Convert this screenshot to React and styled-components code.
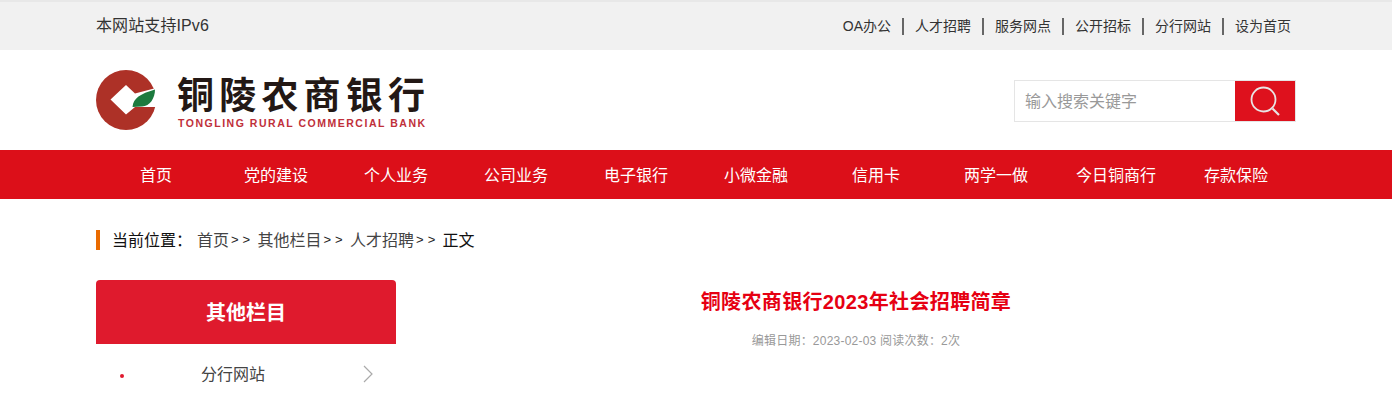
import React from 'react';
import styled, { createGlobalStyle } from 'styled-components';

const GlobalStyle = createGlobalStyle`
  html, body {
    margin: 0;
    padding: 0;
    background: #fff;
    overflow: hidden;
    font-family: "Liberation Sans", "Noto Sans CJK SC", sans-serif;
  }
  * { box-sizing: border-box; }
`;

const Wrap = styled.div`
  width: 1200px;
  margin-left: 96px;
`;

const TopBar = styled.div`
  height: 50px;
  background: #f1f1f1;
  border-top: 2px solid #e8e8e8;
`;

const TopInner = styled(Wrap)`
  height: 48px;
  display: flex;
  justify-content: space-between;
  align-items: center;
`;

const Ipv6 = styled.span`
  font-size: 16px;
  line-height: 20px;
  letter-spacing: 0.1px;
  color: #333;
`;

const TopLinks = styled.div`
  display: flex;
  align-items: center;
  padding-right: 5px;
`;

const TopLink = styled.a`
  font-size: 14px;
  line-height: 17px;
  color: #333;
  padding: 0 11px;
  border-left: ${p => (p.$first ? 'none' : '2px solid #666')};
  &:last-child { padding-right: 0; }
`;

const Header = styled(Wrap)`
  height: 100px;
  display: flex;
  justify-content: space-between;
  align-items: center;
`;

const Logo = styled.div`
  display: flex;
  align-items: center;
  gap: 21px;
`;

const LogoText = styled.div`
  display: flex;
  flex-direction: column;
  padding-top: 5px;
`;

const LogoName = styled.span`
  font-size: 37px;
  line-height: 40px;
  font-weight: 700;
  letter-spacing: 5.2px;
  color: #231815;
  white-space: nowrap;
`;

const LogoEn = styled.span`
  font-size: 10.5px;
  line-height: 12px;
  font-weight: 700;
  letter-spacing: 1.52px;
  margin-left: 1px;
  color: #c0303a;
  white-space: nowrap;
`;

const Search = styled.div`
  width: 282px;
  height: 42px;
  margin-top: 2px;
  border: 1px solid #e5e5e5;
  display: flex;
`;

const SearchInput = styled.div`
  flex: 1;
  padding-left: 10px;
  font-size: 16px;
  line-height: 42px;
  color: #999;
`;

const SearchButton = styled.div`
  width: 60px;
  background: #de111d;
  display: flex;
  align-items: center;
  justify-content: center;
`;

const NavBar = styled.div`
  height: 49px;
  background: #dc0f19;
`;

const NavList = styled(Wrap)`
  display: flex;
`;

const NavItem = styled.a`
  width: 120px;
  text-align: center;
  font-size: 16px;
  line-height: 51px;
  color: #fff;
`;

const Crumbs = styled(Wrap)`
  margin-top: 31px;
  height: 20px;
  border-left: 4px solid #ea6b00;
  padding: 0 0 2px 12px;
  display: flex;
  align-items: center;
  font-size: 16px;
  color: #111;
`;

const CrumbLabel = styled.span`
  width: 85px;
  white-space: nowrap;
`;

const CrumbLink = styled.a`
  color: #444;
`;

const CrumbSep = styled.span`
  width: 28.5px;
  padding-left: 2px;
  font-size: 13px;
  letter-spacing: 4px;
  color: #222;
`;

const Main = styled(Wrap)`
  margin-top: 30px;
  display: flex;
  gap: 20px;
`;

const Side = styled.div`
  width: 300px;
  flex-shrink: 0;
`;

const SideTitle = styled.div`
  height: 64px;
  background: #df1a2d;
  border-radius: 4px 4px 0 0;
  text-align: center;
  font-size: 20px;
  font-weight: 700;
  line-height: 66px;
  color: #fff;
`;

const SideRow = styled.div`
  height: 58px;
  display: flex;
  align-items: center;
  padding: 0 22px 0 24px;
  font-size: 16px;
  color: #444;
`;

const Dot = styled.i`
  width: 4px;
  height: 4px;
  border-radius: 50%;
  background: #e0192e;
  margin: 6px 77px 0 0;
`;

const SideLabel = styled.span`
  flex: 1;
`;

const ChevronWrap = styled.span`
  display: flex;
  margin-top: 2px;
`;

const Article = styled.div`
  flex: 1;
  text-align: center;
`;

const ArticleTitle = styled.h1`
  margin: 7px 0 0;
  font-size: 20px;
  line-height: 30px;
  font-weight: 700;
  letter-spacing: 0.35px;
  color: #e60012;
`;

const Meta = styled.div`
  margin-top: 15px;
  font-size: 12px;
  line-height: 18px;
  letter-spacing: 0.22px;
  color: #999;
`;

const topLinks = ['OA办公', '人才招聘', '服务网点', '公开招标', '分行网站', '设为首页'];
const navItems = ['首页', '党的建设', '个人业务', '公司业务', '电子银行', '小微金融', '信用卡', '两学一做', '今日铜商行', '存款保险'];
const crumbs = ['首页', '其他栏目', '人才招聘'];

function LogoMark() {
  return (
    <svg width="60" height="60" viewBox="0 0 60 60">
      <circle cx="30" cy="30" r="30" fill="#ad3127" />
      <path d="M30 15 L14.5 29.5 L30 44.5 L39 37 L60 37 L60 18 L39 23.5 Z" fill="#fff" />
      <path d="M36.5 37 C37.5 28 44 24 59 19.5 C59 28 54 36.5 46 36.5 Z" fill="#1c7a3e" />
    </svg>
  );
}

function SearchIcon() {
  return (
    <svg width="32" height="32" viewBox="0 0 32 32" fill="none" stroke="#e8e4e4">
      <circle cx="14.5" cy="14.5" r="12" strokeWidth="1.8" />
      <path d="M23.5 23.5 L30 30" strokeWidth="2.2" />
    </svg>
  );
}

function Chevron() {
  return (
    <svg width="12" height="18" viewBox="0 0 12 18" fill="none" stroke="#aaa" strokeWidth="1.2">
      <path d="M2 1 L10 9 L2 17" />
    </svg>
  );
}

export default function App() {
  return (
    <>
      <GlobalStyle />
      <TopBar>
        <TopInner>
          <Ipv6>本网站支持IPv6</Ipv6>
          <TopLinks>
            {topLinks.map((t, i) => (
              <TopLink key={t} $first={i === 0}>{t}</TopLink>
            ))}
          </TopLinks>
        </TopInner>
      </TopBar>
      <Header>
        <Logo>
          <LogoMark />
          <LogoText>
            <LogoName>铜陵农商银行</LogoName>
            <LogoEn>TONGLING RURAL COMMERCIAL BANK</LogoEn>
          </LogoText>
        </Logo>
        <Search>
          <SearchInput>输入搜索关键字</SearchInput>
          <SearchButton><SearchIcon /></SearchButton>
        </Search>
      </Header>
      <NavBar>
        <NavList>
          {navItems.map(t => <NavItem key={t}>{t}</NavItem>)}
        </NavList>
      </NavBar>
      <Crumbs>
        <CrumbLabel>当前位置：</CrumbLabel>
        {crumbs.map(t => (
          <React.Fragment key={t}>
            <CrumbLink>{t}</CrumbLink>
            <CrumbSep>&gt;&gt;</CrumbSep>
          </React.Fragment>
        ))}
        <span>正文</span>
      </Crumbs>
      <Main>
        <Side>
          <SideTitle>其他栏目</SideTitle>
          <SideRow>
            <Dot />
            <SideLabel>分行网站</SideLabel>
            <ChevronWrap><Chevron /></ChevronWrap>
          </SideRow>
        </Side>
        <Article>
          <ArticleTitle>铜陵农商银行2023年社会招聘简章</ArticleTitle>
          <Meta>编辑日期：2023-02-03 阅读次数：2次</Meta>
        </Article>
      </Main>
    </>
  );
}
